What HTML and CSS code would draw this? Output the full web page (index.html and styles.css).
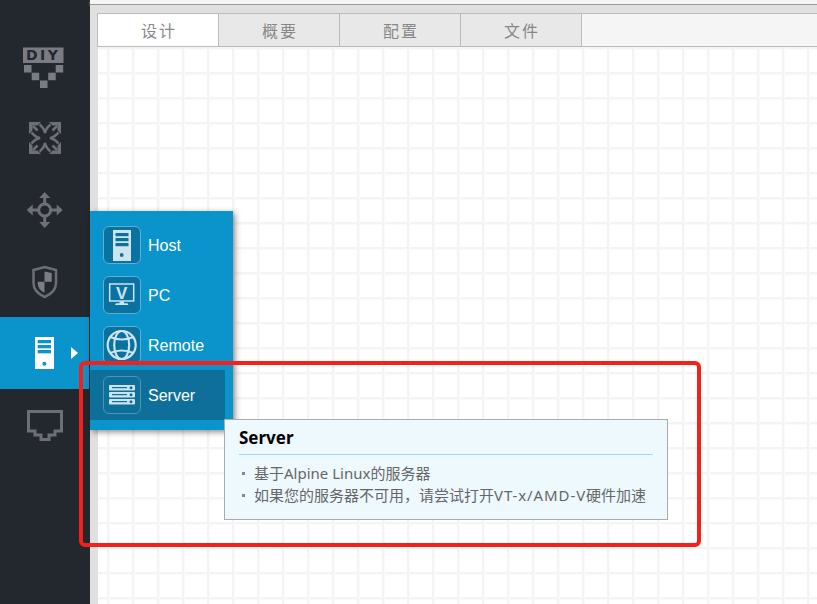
FILE: index.html
```html
<!DOCTYPE html>
<html lang="zh-CN">
<head>
  <meta charset="UTF-8">
  <title>拓扑设计</title>
  <link rel="stylesheet" href="styles.css">
</head>
<body>
  <div class="app">
    <aside class="sidebar">
      <div class="nav_item">
        <svg class="nav_icon" viewBox="0 0 89 72">
          <rect x="23" y="18.500" width="40.500" height="15.500" fill="#7b7c83"/>
          <text class="diy_text" x="26" y="31">DIY</text>
          <g fill="#7b7c83">
            <rect x="24" y="36" width="7.500" height="7.500"/>
            <rect x="55.700" y="36" width="7.500" height="7.500"/>
            <rect x="31.700" y="43.700" width="7.500" height="7.500"/>
            <rect x="48.200" y="43.700" width="7.500" height="7.500"/>
            <rect x="40" y="51.500" width="7.500" height="7.500"/>
          </g>
        </svg>
      </div>
      <div class="nav_item">
        <svg class="nav_icon" viewBox="0 0 89 72">
          <g fill="#6e7076">
            <path d="M29 21H41L37.500 24.500H32.500V29.500L29 33Z"/>
            <path d="M61 21H49L52.500 24.500H57.500V29.500L61 33Z"/>
            <path d="M29 53H41L37.500 49.500H32.500V44.500L29 41Z"/>
            <path d="M61 53H49L52.500 49.500H57.500V44.500L61 41Z"/>
          </g>
          <g fill="none" stroke="#6e7076" stroke-width="2.500">
            <path d="M33 25L37.500 29.500M57 25L52.500 29.500M33 49L37.500 44.500M57 49L52.500 44.500"/>
            <path d="M39.500 23.500Q44 27 45 32Q46 27 50.500 23.500"/>
            <path d="M39.500 50.500Q44 47 45 42Q46 47 50.500 50.500"/>
            <path d="M31.500 31.500Q35 36 40 37Q35 38 31.500 42.500"/>
            <path d="M58.500 31.500Q55 36 50 37Q55 38 58.500 42.500"/>
          </g>
        </svg>
      </div>
      <div class="nav_item">
        <svg class="nav_icon" viewBox="0 0 89 72">
          <circle cx="44.700" cy="37" r="6" fill="none" stroke="#6e7076" stroke-width="3"/>
          <g fill="#6e7076">
            <path d="M44.700 19l5.500 6h-4v5.500h-3V25h-4z"/>
            <path d="M44.700 55l5.500-6h-4v-5.500h-3V49h-4z"/>
            <path d="M26.700 37l6-5.500v4h5.500v3h-5.500v4z"/>
            <path d="M62.700 37l-6-5.500v4h-5.500v3h5.500v4z"/>
          </g>
        </svg>
      </div>
      <div class="nav_item">
        <svg class="nav_icon" viewBox="0 0 89 72">
          <path d="M33.500 25L44.700 22 56 25V38Q56 47 44.700 52 33.500 47 33.500 38Z" fill="none" stroke="#6c6e74" stroke-width="2.500"/>
          <path d="M44.500 26.500L51.700 28V36.700H44.500ZM37.700 36.700H44.500V47.700Q38 45 37.700 38Z" fill="#7d7e84"/>
        </svg>
      </div>
      <div class="nav_item active">
        <svg class="nav_icon" viewBox="0 0 89 72">
          <rect x="35" y="20" width="19" height="32" fill="#fff"/>
          <g fill="#0a94cb">
            <rect x="37.700" y="23" width="13.300" height="3.300"/>
            <rect x="37.700" y="28" width="13.300" height="3.300"/>
            <rect x="37.700" y="33" width="13.300" height="3.300"/>
            <circle cx="44.400" cy="46.700" r="2"/>
          </g>
          <path d="M71 30v12l7-6z" fill="#fff"/>
        </svg>
      </div>
      <div class="nav_item">
        <svg class="nav_icon" viewBox="0 0 89 72">
          <path d="M28.500 22.500H61.500V42H55V46H49V50.500H41V46H35V42H28.500Z" fill="none" stroke="#6e6f75" stroke-width="3"/>
        </svg>
      </div>
    </aside>

    <main class="content">
      <div class="top_strip"></div>
      <div class="tab_frame">
        <div class="tabs">
          <div class="tab selected">设计</div>
          <div class="tab">概要</div>
          <div class="tab">配置</div>
          <div class="tab">文件</div>
        </div>
        <div class="canvas"></div>
      </div>
    </main>
  </div>

  <div class="flyout">
    <div class="fly_item">
      <span class="fly_icon">
        <svg viewBox="0 0 38 38" width="38" height="38">
          <rect x="10" y="4" width="18" height="31" fill="#cde4ee"/>
          <g fill="#0a72a0">
            <rect x="12.500" y="7" width="13" height="3.200"/>
            <rect x="12.500" y="12" width="13" height="3.200"/>
            <rect x="12.500" y="17" width="13" height="3.200"/>
            <circle cx="18.700" cy="29" r="1.900"/>
          </g>
        </svg>
      </span>
      <span class="fly_label">Host</span>
    </div>
    <div class="fly_item">
      <span class="fly_icon">
        <svg viewBox="0 0 38 38" width="38" height="38">
          <rect x="6.700" y="8" width="24" height="17" fill="none" stroke="#cde4ee" stroke-width="1.500"/>
          <text class="pc_text" x="18.700" y="22.500">V</text>
          <path d="M16.500 25.500h4.500v1.800h3.500l1 1.700h-13.500l1-1.700h3.500z" fill="#cde4ee"/>
        </svg>
      </span>
      <span class="fly_label">PC</span>
    </div>
    <div class="fly_item">
      <span class="fly_icon">
        <svg viewBox="0 0 38 38" width="38" height="38">
          <g fill="none" stroke="#cde4ee" stroke-width="2.200">
            <circle cx="18.700" cy="19" r="14"/>
            <ellipse cx="18.700" cy="19" rx="7.500" ry="14"/>
            <path d="M7 11Q18.700 16 30.400 11"/>
            <path d="M7 27Q18.700 22 30.400 27"/>
          </g>
        </svg>
      </span>
      <span class="fly_label">Remote</span>
    </div>
    <div class="fly_item current">
      <span class="fly_icon">
        <svg viewBox="0 0 38 38" width="38" height="38">
          <rect x="6" y="9" width="26" height="5.500" rx="1" fill="#cde4ee"/>
          <rect x="6" y="16" width="26" height="5.500" rx="1" fill="#cde4ee"/>
          <rect x="6" y="23" width="26" height="5.500" rx="1" fill="#cde4ee"/>
          <g fill="#0f6f9b">
            <rect x="9" y="11" width="15" height="1.200"/>
            <rect x="9" y="18" width="15" height="1.200"/>
            <rect x="9" y="25" width="15" height="1.200"/>
            <circle cx="28" cy="11.700" r="1.500"/>
            <circle cx="28" cy="18.700" r="1.500"/>
            <circle cx="28" cy="25.700" r="1.500"/>
          </g>
        </svg>
      </span>
      <span class="fly_label">Server</span>
    </div>
  </div>

  <div class="tooltip">
    <h3 class="tip_title">Server</h3>
    <ul class="tip_list">
      <li><span>基于Alpine Linux的服务器</span></li>
      <li><span>如果您的服务器不可用，请尝试打开<span class="tip_flag">VT-x/AMD-V</span>硬件加速</span></li>
    </ul>
  </div>

  <div class="annotation"></div>
</body>
</html>
```

FILE: styles.css
```css
html, body {
  padding: 0;
  margin: 0;
  height: 100%;
  overflow: hidden;
}

body {
  font-family: "Liberation Sans", Arial, sans-serif;
  background: #fff;
}

.app {
  display: flex;
  height: 604px;
}

.sidebar {
  flex: none;
  width: 90px;
  padding-top: 29px;
  box-sizing: border-box;
  background: #23282f;
}

.nav_item {
  width: 89px;
  height: 72px;
}

.nav_item.active {
  background: #0a94cb;
}

.nav_icon {
  display: block;
  width: 89px;
  height: 72px;
}

.diy_text {
  font: bold 14px "DejaVu Sans", sans-serif;
  letter-spacing: 2.500px;
  fill: #23282f;
}

.content {
  flex: 1;
  display: flex;
  flex-direction: column;
  min-width: 0;
}

.top_strip {
  flex: none;
  height: 4px;
  background: #f5f5f5;
  border-bottom: 1px solid #999;
  box-shadow: 0 1px 2px #aaa;
}

.tab_frame {
  flex: 1;
  display: flex;
  flex-direction: column;
  padding: 8px 0 0 7px;
  background: #e0e0e0;
}

.tabs {
  flex: none;
  display: flex;
  height: 34px;
  box-sizing: border-box;
  border-top: 1px solid #bbb;
  border-bottom: 1px solid #bbb;
  border-left: 1px solid #bbb;
  background: #f5f5f5;
}

.tab {
  width: 121px;
  height: 32px;
  padding-left: 2px;
  box-sizing: border-box;
  border-right: 1px solid #bbb;
  background: #e8e8e8;
  color: #888;
  font: 16px/33px "Noto Sans CJK SC", sans-serif;
  letter-spacing: 2px;
  text-align: center;
}

.tab.selected {
  background: #fff;
}

.canvas {
  flex: 1;
  margin-left: 1px;
  background-color: #fff;
  background-image:
    linear-gradient(to right, #f4f4f4 2px, #fafafa 2px, #fafafa 3px, transparent 3px),
    linear-gradient(to bottom, #f4f4f4 2px, #fafafa 2px, #fafafa 3px, transparent 3px);
  background-size: 25px 25px;
  background-position: 9px 0, 0 0;
}

.flyout {
  position: absolute;
  left: 90px;
  top: 211px;
  width: 143px;
  box-sizing: border-box;
  padding: 9px 8px 10px 0;
  background: #0a94cb;
  box-shadow: 2px 2px 6px rgba(0, 0, 0, 0.45);
}

.fly_item {
  display: flex;
  align-items: center;
  gap: 7px;
  height: 50px;
  padding-left: 13px;
  color: #fff;
  font-size: 16px;
}

.fly_item.current {
  background: #0f6f9b;
}

.fly_label {
  padding-top: 2px;
}

.fly_icon {
  flex: none;
  width: 38px;
  height: 38px;
  box-sizing: border-box;
  border: 1px solid #5cb0d3;
  border-radius: 6px;
  background: #0a72a0;
}

.fly_item.current .fly_icon {
  background: #0f6f9b;
  border-color: #4f94b3;
}

.fly_icon svg {
  display: block;
  margin: -1px;
}

.pc_text {
  font: bold 17px "Liberation Sans", sans-serif;
  fill: #cde4ee;
  text-anchor: middle;
}

.tooltip {
  position: absolute;
  left: 224px;
  top: 419px;
  width: 444px;
  height: 101px;
  box-sizing: border-box;
  padding: 5px 14px 0;
  border: 1px solid #aaa;
  background: #eef9fe;
}

.tip_title {
  margin: 0;
  padding-bottom: 4px;
  border-bottom: 1px solid #a9d5e8;
  color: #000;
  font: bold 17px/25px "Noto Sans", "Noto Sans CJK SC", sans-serif;
}

.tip_list {
  margin: 7px 0 0;
  padding: 0;
  list-style: none;
  color: #666;
  font: 15px/22px "Noto Sans", "Noto Sans CJK SC", sans-serif;
}

.tip_list li {
  display: flex;
  align-items: center;
  gap: 9px;
  padding-left: 3px;
  white-space: nowrap;
}

.tip_list li::before {
  content: "";
  flex: none;
  width: 3px;
  height: 3px;
  background: #888;
}

.tip_flag {
  letter-spacing: 0.900px;
}

.annotation {
  position: absolute;
  left: 79px;
  top: 361px;
  width: 622px;
  height: 186px;
  box-sizing: border-box;
  border: 4px solid #f5201a;
  border-radius: 6px;
}
```
